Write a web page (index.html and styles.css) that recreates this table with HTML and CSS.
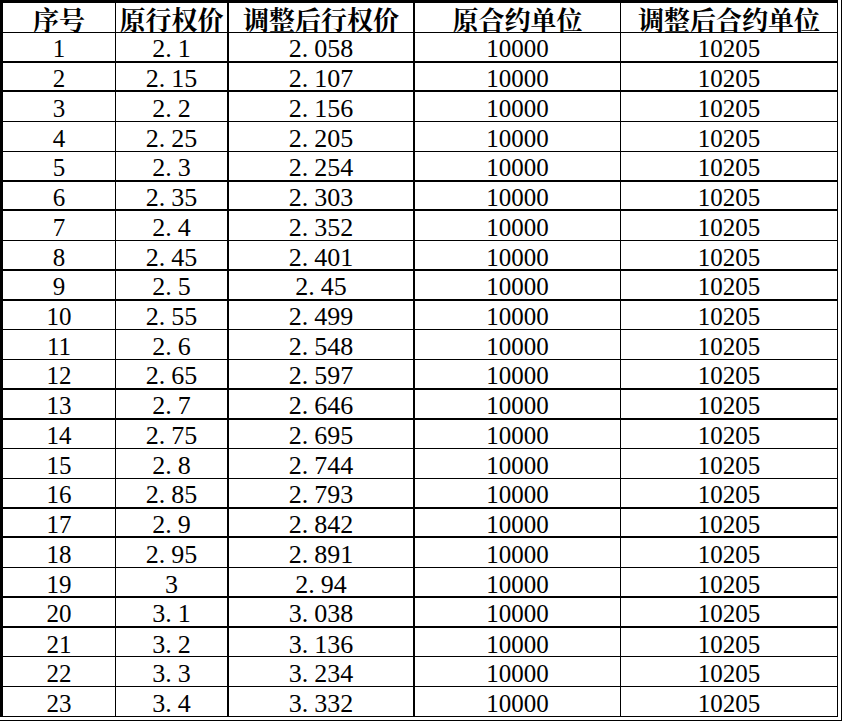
FILE: index.html
```html
<!DOCTYPE html>
<html lang="zh-CN">
<head>
<meta charset="utf-8">
<title>行权价调整表</title>
<link rel="stylesheet" href="styles.css">
</head>
<body>
<div class="frame">
<table class="sheet">
<colgroup>
<col class="c1"><col class="c2"><col class="c3"><col class="c4"><col class="c5">
</colgroup>
<thead>
<tr><th>序号</th><th>原行权价</th><th>调整后行权价</th><th>原合约单位</th><th>调整后合约单位</th></tr>
</thead>
<tbody>
<tr class="thick"><td>1</td><td class="p">2<span class="d">.</span>1</td><td class="p">2<span class="d">.</span>058</td><td>10000</td><td>10205</td></tr>
<tr class="thick"><td>2</td><td class="p">2<span class="d">.</span>15</td><td class="p">2<span class="d">.</span>107</td><td>10000</td><td>10205</td></tr>
<tr><td>3</td><td class="p">2<span class="d">.</span>2</td><td class="p">2<span class="d">.</span>156</td><td>10000</td><td>10205</td></tr>
<tr><td>4</td><td class="p">2<span class="d">.</span>25</td><td class="p">2<span class="d">.</span>205</td><td>10000</td><td>10205</td></tr>
<tr class="thick"><td>5</td><td class="p">2<span class="d">.</span>3</td><td class="p">2<span class="d">.</span>254</td><td>10000</td><td>10205</td></tr>
<tr class="thick"><td>6</td><td class="p">2<span class="d">.</span>35</td><td class="p">2<span class="d">.</span>303</td><td>10000</td><td>10205</td></tr>
<tr><td>7</td><td class="p">2<span class="d">.</span>4</td><td class="p">2<span class="d">.</span>352</td><td>10000</td><td>10205</td></tr>
<tr class="thick"><td>8</td><td class="p">2<span class="d">.</span>45</td><td class="p">2<span class="d">.</span>401</td><td>10000</td><td>10205</td></tr>
<tr class="thick"><td>9</td><td class="p">2<span class="d">.</span>5</td><td class="p">2<span class="d">.</span>45</td><td>10000</td><td>10205</td></tr>
<tr><td>10</td><td class="p">2<span class="d">.</span>55</td><td class="p">2<span class="d">.</span>499</td><td>10000</td><td>10205</td></tr>
<tr><td>11</td><td class="p">2<span class="d">.</span>6</td><td class="p">2<span class="d">.</span>548</td><td>10000</td><td>10205</td></tr>
<tr class="thick"><td>12</td><td class="p">2<span class="d">.</span>65</td><td class="p">2<span class="d">.</span>597</td><td>10000</td><td>10205</td></tr>
<tr class="thick"><td>13</td><td class="p">2<span class="d">.</span>7</td><td class="p">2<span class="d">.</span>646</td><td>10000</td><td>10205</td></tr>
<tr><td>14</td><td class="p">2<span class="d">.</span>75</td><td class="p">2<span class="d">.</span>695</td><td>10000</td><td>10205</td></tr>
<tr><td>15</td><td class="p">2<span class="d">.</span>8</td><td class="p">2<span class="d">.</span>744</td><td>10000</td><td>10205</td></tr>
<tr class="thick"><td>16</td><td class="p">2<span class="d">.</span>85</td><td class="p">2<span class="d">.</span>793</td><td>10000</td><td>10205</td></tr>
<tr class="thick"><td>17</td><td class="p">2<span class="d">.</span>9</td><td class="p">2<span class="d">.</span>842</td><td>10000</td><td>10205</td></tr>
<tr><td>18</td><td class="p">2<span class="d">.</span>95</td><td class="p">2<span class="d">.</span>891</td><td>10000</td><td>10205</td></tr>
<tr class="thick"><td>19</td><td class="p">3</td><td class="p">2<span class="d">.</span>94</td><td>10000</td><td>10205</td></tr>
<tr class="thick"><td>20</td><td class="p">3<span class="d">.</span>1</td><td class="p">3<span class="d">.</span>038</td><td>10000</td><td>10205</td></tr>
<tr><td>21</td><td class="p">3<span class="d">.</span>2</td><td class="p">3<span class="d">.</span>136</td><td>10000</td><td>10205</td></tr>
<tr><td>22</td><td class="p">3<span class="d">.</span>3</td><td class="p">3<span class="d">.</span>234</td><td>10000</td><td>10205</td></tr>
<tr><td>23</td><td class="p">3<span class="d">.</span>4</td><td class="p">3<span class="d">.</span>332</td><td>10000</td><td>10205</td></tr>
</tbody>
</table>
</div>
</body>
</html>
```
FILE: styles.css
```css
html, body {
  margin: 0;
  padding: 0;
  background: #fff;
}

.frame {
  width: 841px;
  height: 720px;
  border-right: 1px solid #000;
  border-bottom: 1px solid #000;
}

.sheet {
  width: 838px;
  border-collapse: separate;
  border-spacing: 0;
  table-layout: fixed;
  color: #000;
}

.c1 { width: 116px; }
.c2 { width: 113px; }
.c3 { width: 186px; }
.c4 { width: 206px; }
.c5 { width: 217px; }

.sheet th,
.sheet td {
  padding: 0;
  text-align: center;
  vertical-align: middle;
  white-space: nowrap;
  border-bottom: 1px solid #000;
  border-right: 1px solid #000;
}

.sheet th:nth-child(1),
.sheet td:nth-child(1) {
  border-left: 3px solid #000;
}

.sheet th:nth-child(2),
.sheet td:nth-child(2),
.sheet th:nth-child(3),
.sheet td:nth-child(3) {
  border-right-width: 2px;
}

.sheet thead tr {
  height: 33px;
}

.sheet th {
  border-top: 3px solid #000;
  font-family: "Noto Serif CJK SC", "Noto Sans CJK SC", sans-serif;
  font-weight: 700;
  font-size: 26px;
  line-height: 26px;
  padding-top: 3px;
}

.sheet tbody tr {
  height: 29.74px;
}

.sheet tbody tr.thick td {
  border-bottom-width: 2px;
}

.sheet td {
  font-family: "Liberation Serif", "Times New Roman", serif;
  font-size: 25px;
  line-height: 20px;
  padding-top: 5px;
}

.sheet td.p {
  font-size: 26px;
}

.sheet .d {
  letter-spacing: 6px;
}
```
